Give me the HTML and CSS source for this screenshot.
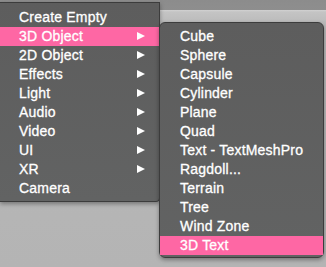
FILE: index.html
```html
<!DOCTYPE html>
<html lang="en">
<head>
    <meta charset="UTF-8">
    <title>GameObject menu</title>
    <link rel="stylesheet" href="styles.css">
</head>
<body>
    <div class="menus">
        <ul class="menu menu-main">
            <li class="item">Create Empty</li>
            <li class="item active">3D Object <span class="arrow"></span></li>
            <li class="item">2D Object <span class="arrow"></span></li>
            <li class="item">Effects <span class="arrow"></span></li>
            <li class="item">Light <span class="arrow"></span></li>
            <li class="item">Audio <span class="arrow"></span></li>
            <li class="item">Video <span class="arrow"></span></li>
            <li class="item">UI <span class="arrow"></span></li>
            <li class="item">XR <span class="arrow"></span></li>
            <li class="item">Camera</li>
        </ul>

        <ul class="menu menu-sub">
            <li class="item">Cube</li>
            <li class="item">Sphere</li>
            <li class="item">Capsule</li>
            <li class="item">Cylinder</li>
            <li class="item">Plane</li>
            <li class="item">Quad</li>
            <li class="item">Text - TextMeshPro</li>
            <li class="item">Ragdoll...</li>
            <li class="item">Terrain</li>
            <li class="item">Tree</li>
            <li class="item">Wind Zone</li>
            <li class="item active">3D Text</li>
        </ul>
    </div>
</body>
</html>
```

FILE: styles.css
```css
* {
    margin: 0;
    padding: 0;
    box-sizing: border-box;
}

body {
    font-family: 'Liberation Sans', Arial, sans-serif;
    font-size: 14px;
    height: 267px;
    overflow: hidden;
    background: linear-gradient(to bottom,
        #8c8c8c 0px, #8e8e8e 10px,
        #d2d2d2 10px, #c4c4c4 12px, #bdbdbd 20px,
        #b9b9b9 22px, #b7b7b7 120px, #b4b4b4 267px);
}

.menus {
    display: flex;
    align-items: flex-start;
}

.menu {
    list-style: none;
    background: linear-gradient(to bottom, #5d5d5d, #626363);
    border: 1px solid #3c3c3c;
    box-shadow: 0 2px 4px rgba(0, 0, 0, 0.35);
    color: #fff;
}

.menu-main {
    width: 160px;
    margin-top: 2px;
    padding: 5px 0 3px;
    border-left: none;
    border-radius: 0 0 4px 0;
}

.menu-sub {
    width: 165px;
    margin-top: 22px;
    margin-left: -1px;
    padding: 4px 0 2px;
    border-radius: 6px;
}

.item {
    display: flex;
    justify-content: space-between;
    align-items: center;
    height: 19px;
    line-height: 19px;
    white-space: nowrap;
    letter-spacing: 0.2px;
    -webkit-text-stroke: 0.3px #fff;
}

.menu-main .item {
    padding: 0 14px 0 19px;
}

.menu-sub .item {
    padding: 0 10px 0 20px;
}

.item.active {
    background-color: #fe67a4;
}

.arrow {
    width: 0;
    height: 0;
    border-top: 4.5px solid transparent;
    border-bottom: 4.5px solid transparent;
    border-left: 8px solid #fff;
    margin-top: -1px;
}
```
